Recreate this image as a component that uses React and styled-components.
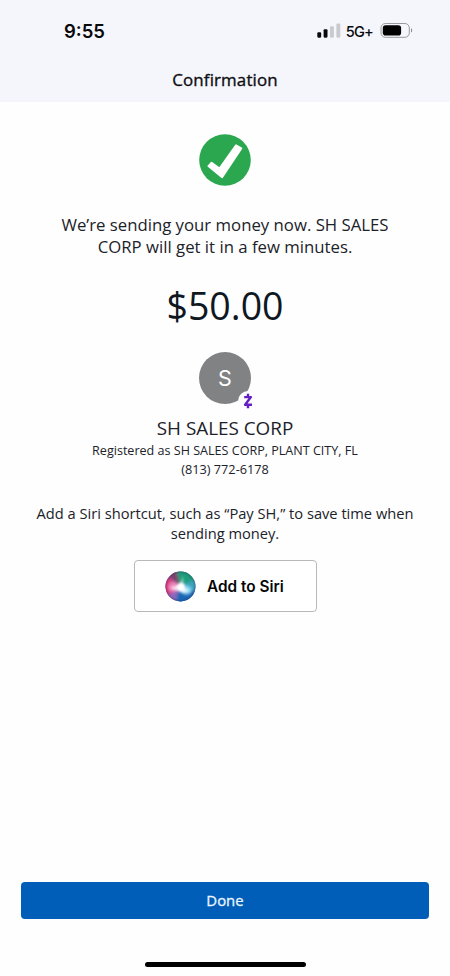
import React from 'react';
import styled, { createGlobalStyle } from 'styled-components';

const GlobalStyle = createGlobalStyle`
  * { box-sizing: border-box; }
  body { margin: 0; background: #fefefe; }
`;

const Screen = styled.div`
  display: flex;
  flex-direction: column;
  width: 100%;
  height: 976px;
  background: #fefefe;
  color: #1b2229;
  font-family: "Open Sans", sans-serif;
`;

const Header = styled.header`
  display: flex;
  flex-direction: column;
  height: 102px;
  background: #f5f6fb;
`;

const StatusBar = styled.div`
  display: flex;
  align-items: center;
  justify-content: space-between;
  height: 62px;
  padding: 0 37px 0 64px;
  font-family: Inter, sans-serif;
  color: #08090b;
`;

const Clock = styled.span`
  font-size: 18.5px;
  font-weight: 600;
  line-height: 24px;
`;

const StatusIcons = styled.div`
  display: flex;
  align-items: center;
`;

const Network = styled.span`
  margin: 2px 7px 0 5px;
  font-size: 14.6px;
  font-weight: 500;
  line-height: 18px;
  letter-spacing: -0.8px;
`;

const Title = styled.h1`
  margin: 6px 0 0;
  font-size: 16.9px;
  font-weight: 500;
  line-height: 23px;
  letter-spacing: 0.14px;
  text-align: center;
  color: #0c0e11;
  -webkit-text-stroke: 0.35px currentColor;
`;

const Content = styled.main`
  display: flex;
  flex: 1;
  flex-direction: column;
  align-items: center;
  padding-top: 32px;
`;

const Message = styled.p`
  width: 350px;
  margin: 28px 0 0;
  font-size: 16.75px;
  line-height: 22.2px;
  text-align: center;
`;

const Amount = styled.div`
  margin-top: 24.2px;
  font-size: 37.5px;
  line-height: 46px;
  color: #0f171f;
`;

const Avatar = styled.div`
  position: relative;
  display: flex;
  align-items: center;
  justify-content: center;
  width: 52px;
  height: 52px;
  margin-top: 23.4px;
  padding-top: 1px;
  border-radius: 50%;
  background: #808284;
  color: #fff;
  font-family: Inter, sans-serif;
  font-size: 21.5px;
  line-height: 26px;
`;

const AvatarBadge = styled.span`
  position: absolute;
  left: 39px;
  top: 39px;
  display: flex;
  align-items: center;
  justify-content: center;
  width: 20px;
  height: 20px;
  border-radius: 50%;
  background: #fefefe;
`;

const Recipient = styled.h2`
  margin: 12px 0 0;
  font-size: 18.87px;
  font-weight: 400;
  line-height: 24px;
`;

const Detail = styled.div`
  font-size: ${(p) => p.$size}px;
  line-height: 18px;
  margin-top: ${(p) => p.$gap || 0}px;
`;

const SiriHint = styled.p`
  width: 400px;
  margin: 25px 0 0;
  font-size: 14.66px;
  line-height: 20px;
  text-align: center;
`;

const SiriButton = styled.button`
  display: flex;
  align-items: center;
  gap: 11px;
  width: 183px;
  height: 52px;
  margin: 17.4px 0 0;
  padding: 0 0 0 30.5px;
  border: 1px solid #b9b9bb;
  border-radius: 4px;
  background: #fff;
  color: #050505;
  font-family: Inter, sans-serif;
  font-size: 15.35px;
  font-weight: 600;
`;

const Footer = styled.footer`
  display: flex;
  flex-direction: column;
  align-items: center;
  height: 94px;
  padding: 0 21px;
`;

const DoneButton = styled.button`
  width: 100%;
  height: 37px;
  padding: 0 0 2px;
  border: 0;
  border-radius: 4px;
  background: #005eb8;
  color: #e9f6ff;
  font-family: "Open Sans", sans-serif;
  font-size: 14.9px;
  font-weight: 500;
  -webkit-text-stroke: 0.3px currentColor;
`;

const HomeIndicator = styled.div`
  width: 161px;
  height: 5px;
  margin-top: 43px;
  border-radius: 3px;
  background: #000;
`;

const Signal = () => (
  <svg width="24" height="16" viewBox="0 0 24 16">
    <rect x="0.3" y="9.3" width="3.9" height="5.4" rx="1.1" fill="#08090b" />
    <rect x="6.6" y="6.2" width="3.9" height="8.5" rx="1.1" fill="#08090b" />
    <rect x="13" y="3.3" width="3.9" height="11.4" rx="1.1" fill="#c9cacd" />
    <rect x="19.4" y="0.5" width="3.9" height="14.2" rx="1.1" fill="#c9cacd" />
  </svg>
);

const Battery = () => (
  <svg width="33" height="16" viewBox="0 0 33 16">
    <rect x="1" y="0.5" width="28.3" height="13.8" rx="4.4" fill="none" stroke="#98999c" strokeWidth="1" />
    <rect x="2.8" y="2.3" width="18.3" height="10.2" rx="2.8" fill="#000" />
    <path d="M31 5.3c1.6.5 1.6 3.7 0 4.2z" fill="#8c8d90" />
  </svg>
);

const SuccessIcon = () => (
  <svg width="52" height="52" viewBox="0 0 52 52">
    <circle cx="26" cy="26" r="25.8" fill="#2aa74f" />
    <path
      d="M9.4 32.1L12.6 28.7L20.5 34.6L37 11.2L42.3 14.4L23.1 43.3Z"
      fill="#fff"
      stroke="#fff"
      strokeWidth="1.9"
      strokeLinejoin="round"
    />
  </svg>
);

const ZelleIcon = () => (
  <svg width="10" height="16" viewBox="0 0 10 16">
    <path
      d="M1.2 4.1H7.9L2.1 11.7H9M5 0.7V4.2M5 11.7V15.2"
      fill="none"
      stroke="#6420c4"
      strokeWidth="2.4"
      strokeLinejoin="round"
    />
  </svg>
);

const SiriOrb = () => (
  <svg width="31" height="31" viewBox="0 0 31 31">
    <defs>
      <clipPath id="orb"><circle cx="15.5" cy="15.5" r="15" /></clipPath>
      <filter id="soft" x="-40%" y="-40%" width="180%" height="180%">
        <feGaussianBlur stdDeviation="1.8" />
      </filter>
      <filter id="glow" x="-50%" y="-50%" width="200%" height="200%">
        <feGaussianBlur stdDeviation="1.3" />
      </filter>
      <radialGradient id="rim">
        <stop offset="0.84" stopColor="#302458" stopOpacity="0" />
        <stop offset="1" stopColor="#302458" stopOpacity="0.35" />
      </radialGradient>
    </defs>
    <g clipPath="url(#orb)">
      <rect width="31" height="31" fill="#485f94" />
      <g filter="url(#soft)">
        <path d="M15 15L-2 1L-4 28L7 30Z" fill="#de3a80" />
        <path d="M15 14L2 3L9 -2L15 1Z" fill="#7d4268" />
        <path d="M15 15L11 -2L29 -3L32 11Z" fill="#1c9c7a" />
        <path d="M15 15L31 8L34 23Z" fill="#3aa3bb" />
        <path d="M15 16L33 21L26 34L8 34Z" fill="#1768b5" />
        <path d="M15 16L10 32L2 25Z" fill="#8a68bc" />
        <ellipse cx="8.5" cy="16" rx="5" ry="5" fill="#f08abf" />
        <ellipse cx="21.5" cy="19" rx="5" ry="4" fill="#8ddcf5" />
      </g>
      <g fill="#fff" filter="url(#glow)">
        <circle cx="16" cy="16" r="4.2" />
        <path d="M15 13L24 20L18 22L5 17Z" opacity="0.7" />
        <path d="M14 14L18 5L19 15Z" opacity="0.45" />
      </g>
      <circle cx="15.5" cy="15.5" r="15" fill="url(#rim)" />
    </g>
  </svg>
);

export default function App() {
  return (
    <Screen>
      <GlobalStyle />
      <Header>
        <StatusBar>
          <Clock>9:55</Clock>
          <StatusIcons>
            <Signal />
            <Network>5G+</Network>
            <Battery />
          </StatusIcons>
        </StatusBar>
        <Title>Confirmation</Title>
      </Header>
      <Content>
        <SuccessIcon />
        <Message>
          We’re sending your money now. SH SALES CORP will get it in a few minutes.
        </Message>
        <Amount>$50.00</Amount>
        <Avatar>
          S
          <AvatarBadge><ZelleIcon /></AvatarBadge>
        </Avatar>
        <Recipient>SH SALES CORP</Recipient>
        <Detail $size={12.57} $gap={2}>Registered as SH SALES CORP, PLANT CITY, FL</Detail>
        <Detail $size={12.72}>(813) 772-6178</Detail>
        <SiriHint>
          Add a Siri shortcut, such as “Pay SH,” to save time when sending money.
        </SiriHint>
        <SiriButton><SiriOrb />Add to Siri</SiriButton>
      </Content>
      <Footer>
        <DoneButton>Done</DoneButton>
        <HomeIndicator />
      </Footer>
    </Screen>
  );
}
